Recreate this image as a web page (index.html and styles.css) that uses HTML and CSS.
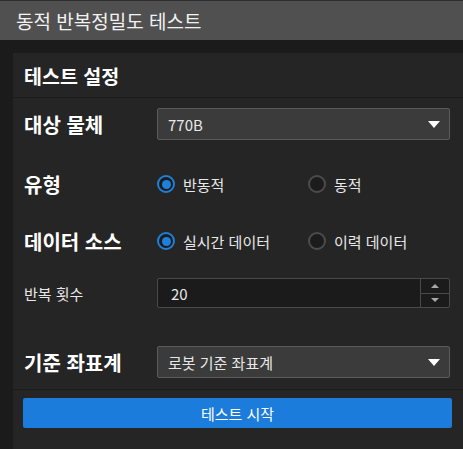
FILE: index.html
```html
<!DOCTYPE html>
<html lang="ko">
<head>
  <meta charset="UTF-8">
  <meta name="viewport" content="width=device-width, initial-scale=1.0">
  <title>동적 반복정밀도 테스트</title>
  <link rel="stylesheet" href="styles.css">
</head>
<body>
  <div class="titlebar">동적 반복정밀도 테스트</div>

  <div class="main">
    <div class="panel">
      <div class="panel-head">테스트 설정</div>

      <div class="form">
        <div class="row">
          <div class="label">대상 물체</div>
          <div class="select">
            <span>770B</span>
            <span class="caret"></span>
          </div>
        </div>

        <div class="row">
          <div class="label">유형</div>
          <div class="radios">
            <label class="radio checked"><span class="dot"></span>반동적</label>
            <label class="radio"><span class="dot"></span>동적</label>
          </div>
        </div>

        <div class="row">
          <div class="label">데이터 소스</div>
          <div class="radios">
            <label class="radio checked"><span class="dot"></span>실시간 데이터</label>
            <label class="radio"><span class="dot"></span>이력 데이터</label>
          </div>
        </div>

        <div class="row">
          <div class="label small">반복 횟수</div>
          <div class="spin">
            <span class="spin-value">20</span>
            <div class="spin-btns">
              <span class="spin-up"></span>
              <span class="spin-down"></span>
            </div>
          </div>
        </div>

        <div class="row">
          <div class="label">기준 좌표계</div>
          <div class="select">
            <span>로봇 기준 좌표계</span>
            <span class="caret"></span>
          </div>
        </div>
      </div>

      <div class="actions">
        <button class="start">테스트 시작</button>
      </div>
    </div>
  </div>
</body>
</html>
```

FILE: styles.css
```css
body {
  margin: 0;
  height: 449px;
  overflow: hidden;
  background: #1b1b1b;
  color: #e8e8e8;
  font-family: "Noto Sans CJK KR", "Noto Sans", sans-serif;
  display: flex;
  flex-direction: column;
}

.titlebar {
  height: 40px;
  box-sizing: border-box;
  border-top: 1px solid #2e2e2e;
  background: #505050;
  color: #f2f2f2;
  font-size: 19px;
  line-height: 39px;
  padding-left: 16px;
}

.main {
  flex: 1;
  display: flex;
  padding: 13px 0 0 13px;
  min-width: 0;
}

.panel {
  flex: 1;
  min-width: 0;
  background: #252525;
  display: flex;
  flex-direction: column;
}

.panel-head {
  height: 44px;
  line-height: 46px;
  padding-left: 11px;
  font-size: 19.5px;
  font-weight: bold;
  color: #fff;
  border-bottom: 1px solid #1c1c1c;
}

.form {
  display: grid;
  grid-template-rows: 60px 57px 52px 69px 32px;
  padding: 10px 13px 0 11px;
}

.row {
  display: flex;
  align-items: center;
  height: 32px;
  min-width: 0;
}

.label {
  width: 133px;
  flex: none;
  font-size: 20px;
  font-weight: bold;
  color: #fff;
}

.label.small {
  font-size: 15px;
  font-weight: normal;
  color: #e8e8e8;
}

.select {
  flex: 1;
  height: 32px;
  box-sizing: border-box;
  background: #3b3b3b;
  border: 1px solid #5b5b5b;
  border-radius: 2px;
  display: flex;
  align-items: center;
  justify-content: space-between;
  padding: 0 9px 0 10px;
  font-size: 15px;
}

.caret {
  width: 0;
  height: 0;
  border-left: 6px solid transparent;
  border-right: 6px solid transparent;
  border-top: 7px solid #fff;
}

.radios {
  flex: 1;
  display: flex;
  font-size: 15px;
}

.radio {
  display: flex;
  align-items: center;
  gap: 8px;
}

.radio:first-child {
  width: 151px;
}

.dot {
  width: 18px;
  height: 18px;
  box-sizing: border-box;
  border-radius: 50%;
  border: 2px solid #4c4c4c;
  background: #1c1c1c;
  display: flex;
  align-items: center;
  justify-content: center;
}

.radio.checked .dot {
  border-color: #1f7fd9;
}

.radio.checked .dot::after {
  content: "";
  width: 9px;
  height: 9px;
  border-radius: 50%;
  background: #1f80db;
}

.spin {
  flex: 1;
  height: 30px;
  box-sizing: border-box;
  background: #1b1b1b;
  border: 1px solid #4a4a4a;
  border-radius: 2px;
  display: flex;
  align-items: center;
}

.spin-value {
  flex: 1;
  padding-left: 13px;
  font-size: 15px;
}

.spin-btns {
  width: 28px;
  height: 100%;
  border-left: 1px solid #4a4a4a;
  display: flex;
  flex-direction: column;
}

.spin-up,
.spin-down {
  flex: 1;
  display: flex;
  align-items: center;
  justify-content: center;
}

.spin-up {
  border-bottom: 1px solid #4a4a4a;
}

.spin-up::after,
.spin-down::after {
  content: "";
  border-left: 4px solid transparent;
  border-right: 4px solid transparent;
}

.spin-up::after {
  border-bottom: 4px solid #a8a8a8;
}

.spin-down::after {
  border-top: 4px solid #a8a8a8;
}

.actions {
  margin-top: 11px;
  border-top: 1px solid #1c1c1c;
  padding: 8px 11px 0 10px;
}

.start {
  width: 100%;
  height: 30px;
  border: none;
  border-radius: 2px;
  background: #1b7cdb;
  color: #fff;
  font-family: inherit;
  font-size: 15px;
  padding: 0;
}
```
